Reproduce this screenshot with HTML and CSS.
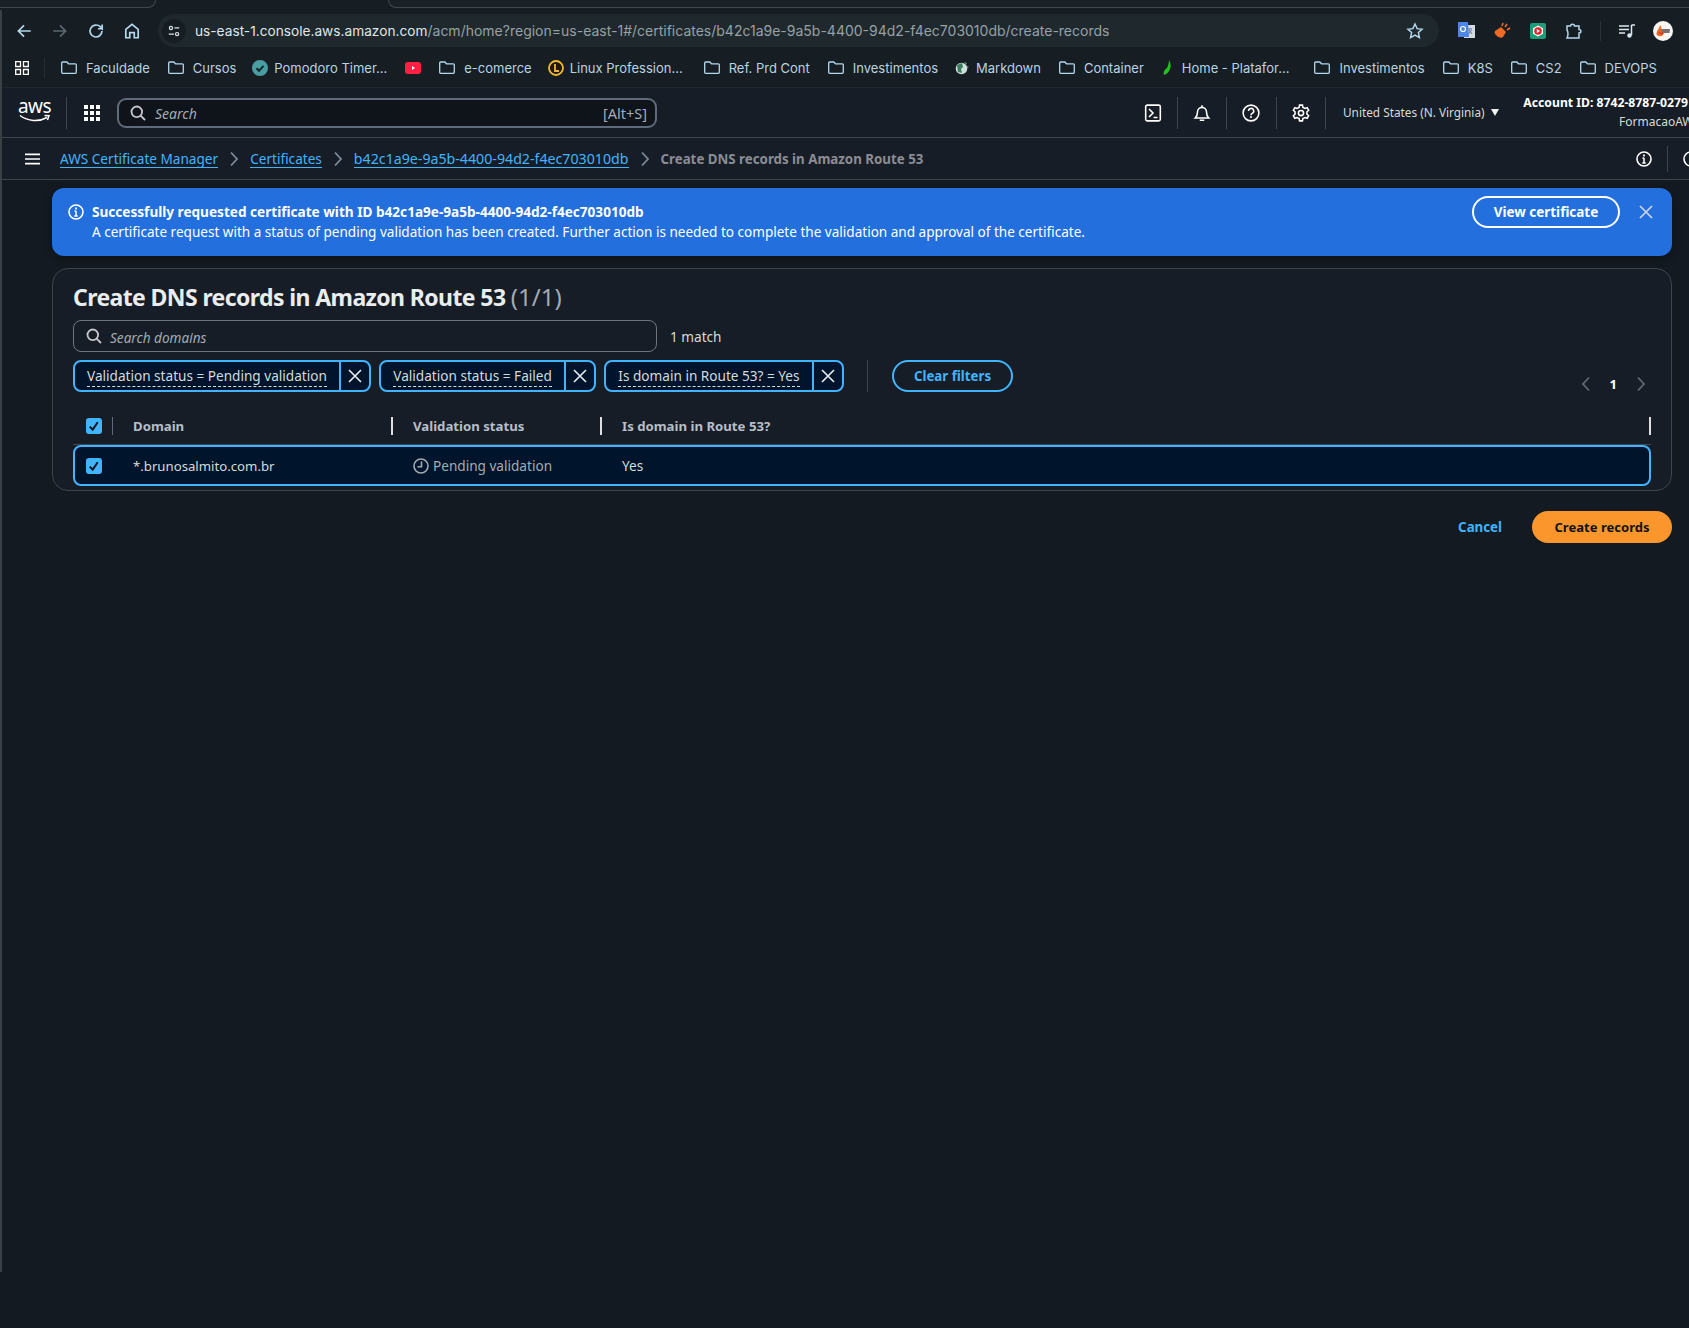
FILE: index.html
```html
<!DOCTYPE html>
<html lang="en">

<head>
    <meta charset="UTF-8">
    <title>Create DNS records in Amazon Route 53</title>
    <link rel="stylesheet" href="styles.css">
</head>

<body>
    <svg class="sprites" width="0" height="0">
        <symbol id="folder" viewBox="0 0 16 16">
            <path d="M.7 3a1 1 0 0 1 1-1h4.100l1.700 1.800h6.800a1 1 0 0 1 1 1v7.500a1 1 0 0 1-1 1H1.700a1 1 0 0 1-1-1z" fill="none" stroke="currentColor" stroke-width="1.300" />
        </symbol>
        <symbol id="x" viewBox="0 0 16 16">
            <path d="M2 2l12 12M14 2L2 14" fill="none" stroke="currentColor" stroke-width="1.700" />
        </symbol>
        <symbol id="search" viewBox="0 0 16 16">
            <circle cx="6.800" cy="6.800" r="5.300" fill="none" stroke="currentColor" stroke-width="1.800" />
            <path d="M10.600 10.600l4.400 4.400" fill="none" stroke="currentColor" stroke-width="1.800" />
        </symbol>
        <symbol id="check" viewBox="0 0 16 16">
            <rect x="0" y="0" width="16" height="16" rx="3" fill="#42b4ff" />
            <path d="M3.800 8.600l2.900 3 5-7.400" fill="none" stroke="#0f141a" stroke-width="2" />
        </symbol>
        <symbol id="chev" viewBox="0 0 10 16">
            <path d="M2 1.500l6 6.500-6 6.500" fill="none" stroke="currentColor" stroke-width="1.800" />
        </symbol>
        <symbol id="info" viewBox="0 0 16 16">
            <circle cx="8" cy="8" r="7" fill="none" stroke="currentColor" stroke-width="1.600" />
            <path d="M8 7v5M6.300 12h3.400M6.500 7H8" fill="none" stroke="currentColor" stroke-width="1.500" />
            <path d="M7.100 3.600h1.800v1.800H7.100z" fill="currentColor" />
        </symbol>
    </svg>

    <div class="edge-strip"></div>

    <div class="tabstrip">
        <div class="tab-left"></div>
        <div class="tab-active"></div>
        <div class="tab-right"></div>
    </div>

    <div class="toolbar">
        <div class="nav-icons">
            <svg class="nav-icon" viewBox="0 0 16 16"><path d="M14 8H3M8 3L3 8l5 5" /></svg>
            <svg class="nav-icon dim" viewBox="0 0 16 16"><path d="M2 8h11M8 3l5 5-5 5" /></svg>
            <svg class="nav-icon" viewBox="0 0 16 16"><path d="M13.300 8a5.300 5.300 0 1 1-1.600-3.800L13.500 6V2.200M13.500 6H9.800" /></svg>
            <svg class="nav-icon" viewBox="0 0 16 16"><path d="M2.500 14V6.500L8 2l5.500 4.500V14H10V9.500H6V14z" /></svg>
        </div>
        <div class="urlbar">
            <span class="site-badge">
                <svg viewBox="0 0 16 16"><circle cx="4.500" cy="4.500" r="1.800" /><path d="M8.500 4.500H14M2 11.500h6" /><circle cx="11.500" cy="11.500" r="1.800" /></svg>
            </span>
            <span class="url"><span class="url-host">us-east-1.console.aws.amazon.com</span>/acm/home?region=us-east-1#/certificates/b42c1a9e-9a5b-4400-94d2-f4ec703010db/create-records</span>
            <svg class="star" viewBox="0 0 16 16"><path d="M8 1.800l1.900 4.100 4.400.5-3.300 3 .9 4.400L8 11.600l-3.900 2.200.9-4.400-3.300-3 4.400-.5z" /></svg>
        </div>
        <div class="extensions">
            <svg class="ext" viewBox="0 0 18 18"><rect x="7" y="3" width="11" height="13" fill="#d5dbe2" /><path d="M11 7h4M13 6v1M11.500 12l3-4M12 8l3 4" stroke="#6b7480" stroke-width="1" /><path d="M1 0h10l1 15H1z" fill="#4b86e8" /><circle cx="6" cy="7" r="2.500" fill="none" stroke="#fff" stroke-width="1.200" /></svg>
            <svg class="ext" viewBox="0 0 18 18"><path d="M2 9l6-4 5 5-3 5c-1 1-4 1-6-1s-3-3-2-5z" fill="#ee6a25" /><path d="M9 4l1-3M12 5l2-3M14 8l3-2" stroke="#ee6a25" stroke-width="1.600" /></svg>
            <svg class="ext" viewBox="0 0 18 18"><rect x="1" y="1" width="16" height="16" rx="2" fill="#1c9c78" /><path d="M9 3.500l5 2.800v5.400l-5 2.800-5-2.800V6.300z" fill="#fff" /><circle cx="9" cy="9" r="3.800" fill="#e3242b" /><path d="M7.800 7l3.200 2-3.200 2z" fill="#fff" /></svg>
            <svg class="ext" viewBox="0 0 18 18"><path d="M2 4h3.500c0-2.500 4-2.500 4 0H14v3.500c2.500 0 2.500 3.500 0 3.500v5H2c1-2 1-3 1-4s0-2.500-1-4z" fill="none" stroke="#b4d8ee" stroke-width="1.500" /></svg>
            <span class="ext-sep"></span>
            <svg class="ext" viewBox="0 0 18 18"><path d="M1 4h10M1 7.500h10M1 11h6" stroke="#dbe8f0" stroke-width="1.500" /><path d="M13.500 3v10" stroke="#dbe8f0" stroke-width="1.500" /><path d="M13.500 3H17" stroke="#dbe8f0" stroke-width="1.500" /><circle cx="11.500" cy="13.500" r="2.200" fill="#dbe8f0" /></svg>
            <svg class="avatar" viewBox="0 0 20 20"><circle cx="10" cy="10" r="10" fill="#f7f5f2" /><path d="M3.500 13c0-4 3-5 3.500-9 2 2 1.500 4 1 5 2-1 4 2 2 5-2 2-6 1.500-6.500-1z" fill="#ef6a22" /><path d="M8 8h9l-.5 4H9z" fill="#7b6e72" /><path d="M6 11c1 2 3 2 4 1" stroke="#d3262c" stroke-width="1.200" fill="none" /></svg>
        </div>
    </div>

    <div class="bookmarks">
        <svg class="apps-icon" viewBox="0 0 14 14"><path d="M.7.700h4.800v4.800H.7zM8.500.700h4.800v4.800H8.500zM.7 8.500h4.800v4.800H.7zM8.500 8.500h4.800v4.800H8.500z" /></svg>
        <span class="bm-sep"></span>
        <a class="bm"><svg class="bm-icon"><use href="#folder" /></svg>Faculdade</a>
        <a class="bm"><svg class="bm-icon"><use href="#folder" /></svg>Cursos</a>
        <a class="bm"><svg class="bm-fav" viewBox="0 0 16 16"><circle cx="8" cy="8" r="8" fill="#4a9ea3" /><path d="M4.500 8.300l2.500 2.500 4.500-5" fill="none" stroke="#14262b" stroke-width="2" /></svg>Pomodoro Timer...</a>
        <a class="bm bm-video"><svg class="bm-fav" viewBox="0 0 16 16"><rect x="0" y="2" width="16" height="12" rx="3" fill="#ff1f43" /><path d="M7 6l3 2-3 2z" fill="#fff" /></svg></a>
        <a class="bm"><svg class="bm-icon"><use href="#folder" /></svg>e-comerce</a>
        <a class="bm bm-linux"><svg class="bm-fav" viewBox="0 0 16 16"><circle cx="8" cy="8" r="7" fill="#1c1a10" stroke="#f2b632" stroke-width="1.800" /><path d="M7 4v7h4" fill="none" stroke="#f2b632" stroke-width="1.800" /></svg>Linux Profession...</a>
        <a class="bm"><svg class="bm-icon"><use href="#folder" /></svg>Ref. Prd Cont</a>
        <a class="bm"><svg class="bm-icon"><use href="#folder" /></svg>Investimentos</a>
        <a class="bm"><svg class="bm-fav" viewBox="0 0 16 16"><circle cx="7.500" cy="8.500" r="5.800" fill="#cfe0da" /><path d="M3 5l5-2 1 4-2 2 1 4-4-1z" fill="#3e7a5e" /><path d="M10 2l3 1-1 2zM13 6l2 1-2 1z" fill="#5c8f78" /></svg>Markdown</a>
        <a class="bm"><svg class="bm-icon"><use href="#folder" /></svg>Container</a>
        <a class="bm bm-home"><svg class="bm-leaf" viewBox="0 0 10 16"><path d="M7 0c2 3 2 7 1 9-1 3-3 5-6 6-1-3 0-5 3-7 1-2 2-5 2-8z" fill="#22c21e" /></svg>Home - Platafor...</a>
        <a class="bm"><svg class="bm-icon"><use href="#folder" /></svg>Investimentos</a>
        <a class="bm"><svg class="bm-icon"><use href="#folder" /></svg>K8S</a>
        <a class="bm"><svg class="bm-icon"><use href="#folder" /></svg>CS2</a>
        <a class="bm"><svg class="bm-icon"><use href="#folder" /></svg>DEVOPS</a>
    </div>

    <div class="console-nav">
        <div class="aws-logo">
            <span class="aws-word">aws</span>
            <svg viewBox="0 0 32 9"><path d="M1 1.500c8 6 19 6.500 27 2" fill="none" stroke="#fff" stroke-width="1.500" /><path d="M25.500 1.500l4.500.2-1.500 4.300" fill="none" stroke="#fff" stroke-width="1.500" /></svg>
        </div>
        <span class="nav-sep nav-sep-logo"></span>
        <svg class="grid-icon" viewBox="0 0 16 16"><path d="M0 0h4v4H0zM6 0h4v4H6zM12 0h4v4h-4zM0 6h4v4H0zM6 6h4v4H6zM12 6h4v4h-4zM0 12h4v4H0zM6 12h4v4H6zM12 12h4v4h-4z" /></svg>
        <div class="global-search">
            <svg class="search-icon"><use href="#search" /></svg>
            <span class="global-search-text">Search</span>
            <span class="shortcut">[Alt+S]</span>
        </div>
        <div class="nav-tools">
            <svg class="tool" viewBox="0 0 16 16"><rect x="1.500" y="1" width="13" height="14" rx="1.500" /><path d="M4.500 4.500L8 8l-3.500 3.500M8.500 12H12" /></svg>
            <span class="nav-sep"></span>
            <svg class="tool" viewBox="0 0 16 16"><path d="M2 12.500h12c-1.500-1.500-2-3-2-5.500a4 4 0 0 0-8 0c0 2.500-.5 4-2 5.500zM8 1v2M6 14.500h4" /></svg>
            <span class="nav-sep"></span>
            <svg class="tool" viewBox="0 0 16 16"><circle cx="8" cy="8" r="7" /><path d="M5.800 6.200a2.300 2.300 0 1 1 3.300 2.100c-.8.400-1.100.9-1.100 1.700M7.100 11.500h1.800" /></svg>
            <span class="nav-sep"></span>
            <svg class="tool" viewBox="0 0 16 16"><circle cx="8" cy="8" r="2.300" /><path d="M6.700 1h2.600l.4 2 1.900 1 1.900-.7 1.300 2.300-1.500 1.300v2.200l1.500 1.300-1.300 2.300-1.900-.7-1.900 1-.4 2H6.700l-.4-2-1.900-1-1.900.7-1.300-2.300 1.500-1.300V6.900L1.200 5.600l1.300-2.300 1.900.7 1.900-1z" /></svg>
            <span class="nav-sep"></span>
        </div>
        <div class="region">United States (N. Virginia)<span class="caret"></span></div>
        <div class="account">
            <div class="account-id">Account ID: 8742-8787-0279</div>
            <div class="account-name">FormacaoAWS</div>
        </div>
    </div>

    <div class="breadcrumbs">
        <svg class="menu-icon" viewBox="0 0 16 12"><path d="M0 1h16M0 6h16M0 11h16" /></svg>
        <a class="crumb crumb-link">AWS Certificate Manager</a>
        <svg class="crumb-chev"><use href="#chev" /></svg>
        <a class="crumb crumb-link">Certificates</a>
        <svg class="crumb-chev"><use href="#chev" /></svg>
        <a class="crumb crumb-link crumb-id">b42c1a9e-9a5b-4400-94d2-f4ec703010db</a>
        <svg class="crumb-chev"><use href="#chev" /></svg>
        <span class="crumb crumb-current">Create DNS records in Amazon Route 53</span>
        <div class="crumb-tools">
            <svg class="crumb-info"><use href="#info" /></svg>
            <span class="crumb-sep"></span>
            <svg class="crumb-info"><use href="#info" /></svg>
        </div>
    </div>

    <main class="content">
        <div class="flash">
            <svg class="flash-icon"><use href="#info" /></svg>
            <div class="flash-text">
                <div class="flash-title">Successfully requested certificate with ID b42c1a9e-9a5b-4400-94d2-f4ec703010db</div>
                <div class="flash-body">A certificate request with a status of pending validation has been created. Further action is needed to complete the validation and approval of the certificate.</div>
            </div>
            <button class="flash-btn">View certificate</button>
            <svg class="flash-close"><use href="#x" /></svg>
        </div>

        <section class="card">
            <h1 class="card-title">Create DNS records in Amazon Route 53 <span class="count">(1/1)</span></h1>

            <div class="filter-row">
                <div class="filter-input">
                    <svg class="search-icon"><use href="#search" /></svg>
                    <span class="placeholder">Search domains</span>
                </div>
                <span class="match">1 match</span>
            </div>

            <div class="token-row">
                <div class="token">
                    <span class="token-label"><span>Validation status = Pending validation</span></span>
                    <span class="token-x"><svg><use href="#x" /></svg></span>
                </div>
                <div class="token">
                    <span class="token-label"><span>Validation status = Failed</span></span>
                    <span class="token-x"><svg><use href="#x" /></svg></span>
                </div>
                <div class="token">
                    <span class="token-label"><span>Is domain in Route 53? = Yes</span></span>
                    <span class="token-x"><svg><use href="#x" /></svg></span>
                </div>
                <span class="token-sep"></span>
                <button class="clear-btn">Clear filters</button>
                <div class="pager">
                    <svg class="pager-chev flip"><use href="#chev" /></svg>
                    <span class="pager-num">1</span>
                    <svg class="pager-chev"><use href="#chev" /></svg>
                </div>
            </div>

            <div class="table-head">
                <div class="col-check"><svg class="checkbox"><use href="#check" /></svg><span class="check-sep"></span></div>
                <div class="col-domain">Domain</div>
                <div class="col-status"><span class="resizer"></span>Validation status</div>
                <div class="col-route"><span class="resizer"></span>Is domain in Route 53?</div>
                <span class="resizer"></span>
            </div>
            <div class="table-row">
                <div class="col-check"><svg class="checkbox"><use href="#check" /></svg></div>
                <div class="col-domain cell domain-name">*.brunosalmito.com.br</div>
                <div class="col-status cell status-pending">
                    <svg class="clock" viewBox="0 0 16 16"><circle cx="8" cy="8" r="7" /><path d="M8.500 3.500V8.800H4.500" /></svg>Pending validation
                </div>
                <div class="col-route cell">Yes</div>
            </div>
        </section>

        <div class="actions">
            <a class="cancel">Cancel</a>
            <button class="primary">Create records</button>
        </div>
    </main>
</body>

</html>
```

FILE: styles.css
```css
* {
    box-sizing: border-box;
}

html,
body {
    margin: 0;
    height: 100%;
}

body {
    width: 1689px;
    height: 1328px;
    overflow: hidden;
    background-color: #131a21;
    color: #d5dbdb;
    font-family: "Noto Sans", sans-serif;
    font-size: 13.600px;
    position: relative;
}

.sprites {
    position: absolute;
}

.edge-strip {
    position: absolute;
    left: 0;
    top: 10px;
    width: 2px;
    height: 1262px;
    background-color: #3b4046;
}

button {
    font-family: inherit;
    cursor: pointer;
}

/* browser chrome */

.tabstrip {
    height: 8px;
    background-color: #171e23;
    display: flex;
}

.tab-left {
    width: 156px;
    border-bottom: 1px solid #41484d;
    border-right: 1px solid #41484d;
    border-bottom-right-radius: 8px;
    background-color: #1a2126;
}

.tab-active {
    width: 232px;
}

.tab-right {
    flex: 1;
    border-bottom: 1px solid #41484d;
    border-left: 1px solid #41484d;
    border-bottom-left-radius: 8px;
    background-color: #1a2126;
}

.toolbar {
    height: 39px;
    background-color: #171e23;
    display: flex;
    align-items: center;
    padding-top: 6px;
}

.nav-icons {
    display: flex;
    gap: 18px;
    padding-left: 15px;
    width: 158px;
}

.nav-icon {
    width: 18px;
    height: 18px;
    fill: none;
    stroke: #b4d8ee;
    stroke-width: 1.500;
}

.nav-icon.dim {
    stroke: #5a6870;
}

.urlbar {
    width: 1281px;
    height: 33px;
    border-radius: 17px;
    background-color: #1f282c;
    display: flex;
    align-items: center;
    font-family: Inter, sans-serif;
    font-size: 14px;
    color: #96a1a6;
}

.site-badge {
    width: 24px;
    height: 24px;
    margin-left: 4px;
    margin-right: 9px;
    border-radius: 50%;
    background-color: #171e23;
    display: flex;
    align-items: center;
    justify-content: center;
}

.site-badge svg {
    width: 14px;
    height: 14px;
    fill: none;
    stroke: #d7e3ea;
    stroke-width: 1.400;
}

.url-host {
    color: #dfe6ea;
    font-size: 13.700px;
}

.star {
    width: 18px;
    height: 18px;
    margin-left: auto;
    margin-right: 15px;
    fill: none;
    stroke: #b4d8ee;
    stroke-width: 1.300;
}

.extensions {
    display: flex;
    align-items: center;
    padding-left: 18px;
    gap: 18px;
}

.ext {
    width: 18px;
    height: 18px;
}

.ext-sep {
    width: 1px;
    height: 20px;
    background-color: #2a3238;
    margin: 0 -1px;
}

.avatar {
    width: 20px;
    height: 20px;
    margin-left: -1px;
}

.bookmarks {
    height: 41px;
    background-color: #171e23;
    display: flex;
    align-items: center;
    padding: 2px 0 0 15px;
    font-family: Inter, sans-serif;
    font-size: 13px;
    color: #b9d3e2;
    border-bottom: 1px solid #20272c;
}

.apps-icon {
    width: 14px;
    height: 14px;
    fill: none;
    stroke: #fff;
    stroke-width: 1.300;
}

.bm-sep {
    width: 1px;
    height: 20px;
    margin: 0 16px 0 15px;
    background-color: #252c32;
}

.bm {
    display: flex;
    align-items: center;
    white-space: nowrap;
    margin-right: 18px;
}

.bm-icon {
    width: 16px;
    height: 16px;
    margin-right: 9px;
    color: #b4d8ee;
}

.bm-fav {
    width: 16px;
    height: 16px;
    margin: 0 6px 0 -2px;
}

.bm-leaf {
    width: 10px;
    height: 16px;
    margin-right: 10px;
}

.bm-video {
    margin-right: 12px;
}

.bm-video .bm-fav {
    margin-left: 0;
}

.bm-linux {
    margin-right: 21px;
}

.bm-home {
    margin-right: 25px;
}

/* console header */

.console-nav {
    height: 50px;
    background-color: #161d26;
    display: flex;
    align-items: center;
    border-bottom: 1px solid #3f454d;
    padding-left: 19px;
    white-space: nowrap;
}

.aws-logo {
    width: 31px;
    display: flex;
    flex-direction: column;
    align-items: center;
    color: #fff;
}

.aws-word {
    font-size: 19px;
    line-height: 15px;
    letter-spacing: -0.500px;
    height: 15px;
    margin-top: -4px;
}

.aws-logo svg {
    width: 32px;
    height: 9px;
}

.nav-sep {
    width: 1px;
    height: 32px;
    background-color: #3f454d;
    flex: none;
}

.nav-sep-logo {
    margin: 0 16px;
}

.grid-icon {
    width: 16px;
    height: 16px;
    fill: #fff;
    margin: 0 17px 0 1px;
    flex: none;
}

.global-search {
    width: 540px;
    height: 30px;
    flex: none;
    background-color: #0f141a;
    border: 2px solid #5f6b7a;
    border-radius: 9px;
    display: flex;
    align-items: center;
    padding: 0 8px 0 11px;
}

.search-icon {
    width: 16px;
    height: 16px;
    color: #c6c6cd;
    flex: none;
}

.global-search-text {
    margin-left: 9px;
    padding-top: 1px;
    font-style: italic;
    font-size: 14px;
    color: #a4abb3;
}

.shortcut {
    margin-left: auto;
    padding-top: 1px;
    font-size: 14.500px;
    color: #a4abb3;
}

.nav-tools {
    display: flex;
    align-items: center;
    margin-left: 471.500px;
    flex: none;
}

.tool {
    width: 18px;
    height: 18px;
    margin: 0 15.200px;
    fill: none;
    stroke: #fff;
    stroke-width: 1.400;
}

.region {
    margin-left: 17px;
    font-size: 11.800px;
    color: #d5dbdb;
    display: flex;
    align-items: center;
    width: 168px;
    flex: none;
    padding-bottom: 1px;
}

.caret {
    margin-left: 6px;
    border: 4px solid transparent;
    border-top: 7px solid #f0f2f3;
    border-bottom: 0;
}

.account {
    font-size: 12.200px;
    width: 179px;
    flex: none;
    margin-top: -1px;
}

.account-id {
    font-weight: 700;
    color: #fff;
    line-height: 15px;
    margin-bottom: 4px;
    text-align: right;
    margin-right: 2px;
}

.account-name {
    line-height: 15px;
    overflow: hidden;
    white-space: nowrap;
    margin-left: 108px;
    font-size: 12px;
}

.breadcrumbs {
    height: 42px;
    background-color: #161d26;
    display: flex;
    align-items: center;
    border-bottom: 1px solid #3f454d;
    padding-left: 25px;
    white-space: nowrap;
    overflow: hidden;
}

.menu-icon {
    width: 15px;
    height: 12px;
    margin-right: 20px;
    fill: none;
    stroke: #fff;
    stroke-width: 1.800;
}

.crumb-link {
    color: #42b4ff;
    border-bottom: 1px solid #42b4ff;
    line-height: 17px;
}

.crumb-id {
    font-size: 14.200px;
}

.crumb-current {
    color: #8c8c94;
    font-weight: 700;
    font-size: 13.300px;
}

.crumb-chev {
    width: 10px;
    height: 16px;
    margin: 0 11px;
    color: #7d8998;
}

.crumb-tools {
    margin-left: auto;
    display: flex;
    align-items: center;
    gap: 15px;
    margin-right: -10px;
}

.crumb-info {
    width: 16px;
    height: 16px;
    color: #fff;
}

.crumb-sep {
    width: 1px;
    height: 26px;
    background-color: #3f454d;
}

/* page content */

.content {
    padding: 8px 17px 0 52px;
}

.flash {
    height: 68px;
    background-color: #226fdd;
    border-radius: 12px;
    box-shadow: 0 2px 10px rgba(0, 0, 0, 0.350);
    color: #fff;
    display: flex;
    align-items: flex-start;
    padding: 8px 18px 0 16px;
}

.flash-icon {
    width: 16px;
    height: 16px;
    margin: 8px 8px 0 0;
    flex: none;
}

.flash-text {
    line-height: 20px;
    padding-top: 6px;
    flex: 1;
}

.flash-title {
    font-weight: 700;
}

.flash-body {
    font-size: 13.560px;
}

.flash-btn {
    width: 148px;
    height: 32px;
    background: transparent;
    border: 2px solid #fff;
    border-radius: 16px;
    color: #fff;
    font-size: 13.450px;
    font-weight: 700;
}

.flash-close {
    width: 16px;
    height: 16px;
    margin: 8px 0 0 18px;
    color: #ccd6e2;
}

.card {
    margin-top: 12px;
    height: 223px;
    background-color: #161d26;
    border: 1px solid #3f454d;
    border-radius: 16px;
    padding: 0 20px 0 20px;
}

.card-title {
    margin: 0;
    padding-top: 11px;
    height: 51px;
    font-size: 23px;
    line-height: 34px;
    font-weight: 700;
    color: #eaeded;
    letter-spacing: -0.600px;
}

.count {
    font-weight: 400;
    font-size: 24px;
    letter-spacing: 0;
    color: #a4abb3;
}

.filter-row {
    display: flex;
    align-items: center;
    height: 32px;
}

.filter-input {
    width: 584px;
    height: 32px;
    border: 1px solid #72747c;
    border-radius: 8px;
    display: flex;
    align-items: center;
    padding-left: 12px;
}

.placeholder {
    margin-left: 8px;
    padding-top: 2px;
    font-style: italic;
    color: #a4abb3;
}

.match {
    margin-left: 13px;
    padding-top: 1px;
    color: #d5dbdb;
}

.token-row {
    display: flex;
    align-items: flex-start;
    margin-top: 8px;
    height: 32px;
}

.token {
    height: 32px;
    display: flex;
    margin-right: 8px;
    background-color: #00142b;
    border: 2px solid #42b4ff;
    border-radius: 8px;
    color: #d5dbdb;
}

.token-label {
    padding: 1px 12.500px 0 12px;
    line-height: 26px;
    border-right: 2px solid #42b4ff;
    white-space: nowrap;
}

.token-label span {
    border-bottom: 1px dashed #d5dbdb;
    padding-bottom: 1px;
}

.token-x {
    width: 28px;
    display: flex;
    align-items: center;
    justify-content: center;
    color: #e5e9ec;
}

.token-x svg {
    width: 16px;
    height: 16px;
}

.token-sep {
    width: 1px;
    height: 32px;
    margin: 0 24px 0 15px;
    background-color: #3f454d;
}

.clear-btn {
    width: 121px;
    height: 32px;
    background: transparent;
    border: 2px solid #42b4ff;
    border-radius: 16px;
    color: #42b4ff;
    font-size: 13.300px;
    font-weight: 700;
}

.pager {
    margin-left: auto;
    margin-right: 5px;
    margin-top: 15px;
    display: flex;
    align-items: center;
    gap: 19px;
}

.pager-chev {
    width: 10px;
    height: 16px;
    color: #656871;
}

.pager-chev.flip {
    transform: scaleX(-1);
}

.pager-num {
    font-size: 13px;
    font-weight: 700;
    color: #fff;
}

.table-head {
    height: 53px;
    display: flex;
    align-items: center;
    padding-top: 15px;
    font-size: 13.200px;
    font-weight: 700;
    color: #b6bec9;
    border-bottom: 1px solid #414750;
}

.col-check {
    width: 60px;
    flex: none;
    padding-left: 13px;
    display: flex;
    align-items: center;
}

.checkbox {
    width: 16px;
    height: 16px;
}

.check-sep {
    width: 1px;
    height: 18px;
    margin-left: 10px;
    background-color: #5f6b7a;
}

.col-domain {
    width: 258px;
    flex: none;
}

.col-status {
    width: 209px;
    flex: none;
    display: flex;
    align-items: center;
}

.col-route {
    flex: 1;
    display: flex;
    align-items: center;
}

.resizer {
    width: 2px;
    height: 18px;
    background-color: #dedee3;
    margin-right: 20px;
    flex: none;
}

.table-head > .resizer {
    margin-right: 0;
}

.table-row {
    height: 41px;
    display: flex;
    align-items: center;
    background-color: #00142b;
    border: 2px solid #42b4ff;
    border-radius: 8px;
}

.table-row .col-check {
    width: 58px;
    padding-left: 11px;
}

.cell {
    color: #d5dbdb;
}

.domain-name {
    font-size: 13.200px;
}

.table-row .col-status,
.table-row .col-route {
    padding-left: 22px;
}

.status-pending {
    color: #a4abb3;
}

.clock {
    width: 16px;
    height: 16px;
    margin-right: 4px;
    fill: none;
    stroke: #a4abb3;
    stroke-width: 1.600;
}

.actions {
    margin-top: 20px;
    display: flex;
    justify-content: flex-end;
    align-items: center;
}

.cancel {
    color: #42b4ff;
    font-size: 13.300px;
    font-weight: 700;
    margin-right: 30px;
}

.primary {
    width: 140px;
    height: 32px;
    border: none;
    border-radius: 16px;
    background-color: #fb962c;
    color: #0f141a;
    font-size: 13.050px;
    font-weight: 700;
}
```
